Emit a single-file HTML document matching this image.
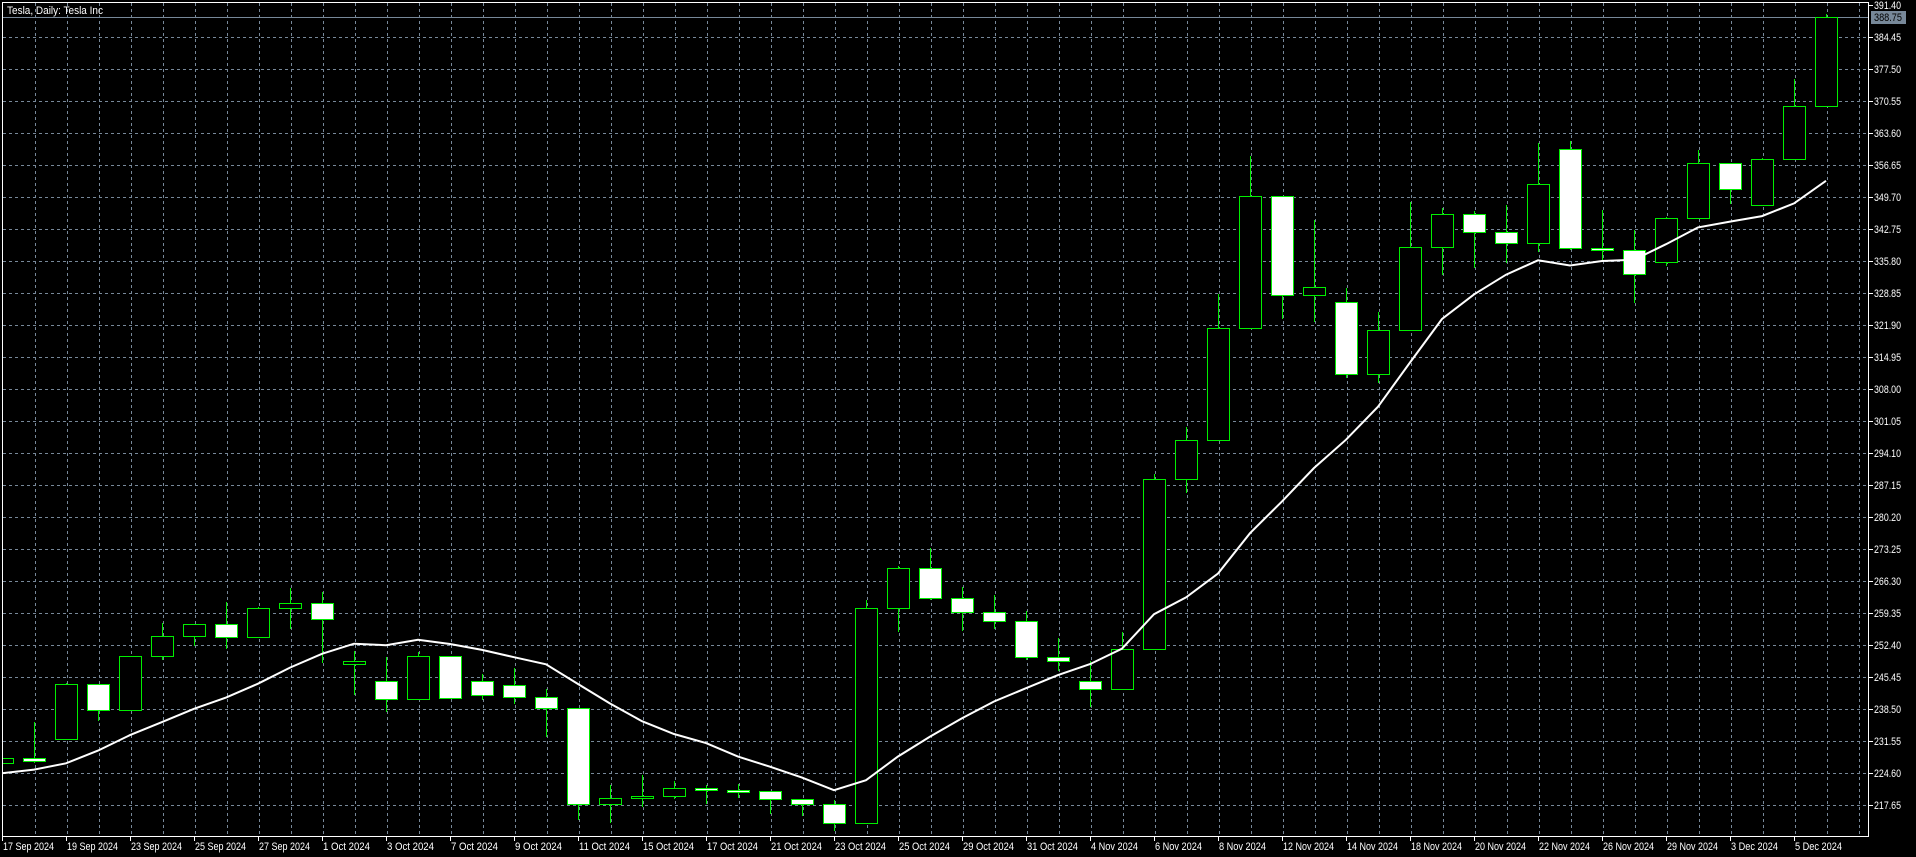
<!DOCTYPE html>
<html><head><meta charset="utf-8">
<style>
html,body{margin:0;padding:0;background:#000;width:1916px;height:857px;overflow:hidden}
svg{display:block}
text{font-family:"Liberation Sans",sans-serif;font-size:11px;fill:#fff}
</style></head>
<body>
<svg id="c" width="1916" height="857" xmlns="http://www.w3.org/2000/svg">
<rect width="1916" height="857" fill="#000"/>
<defs><clipPath id="cl"><rect x="3" y="3" width="1865" height="833"/></clipPath></defs>
<g id="grid" stroke="#778899" stroke-width="1" stroke-dasharray="3,3" shape-rendering="crispEdges"></g>
<line x1="3" y1="17.5" x2="1868" y2="17.5" stroke="#778899" shape-rendering="crispEdges"/>
<g id="bars" clip-path="url(#cl)" shape-rendering="crispEdges"></g>
<polyline id="ma" clip-path="url(#cl)" fill="none" stroke="#fff" stroke-width="2"/>
<g id="frame" stroke="#fff" stroke-width="1" shape-rendering="crispEdges" fill="none">
<path d="M2.5 836.5 V2.5 H1868.5 V836.5 H2.5"/>
</g>
<g id="axis"></g>
<text x="7" y="14" textLength="96" lengthAdjust="spacingAndGlyphs">Tesla, Daily:  Tesla Inc</text>
<rect x="1871" y="11" width="35" height="13" fill="#778899"/>
<text x="1874" y="21" textLength="28" lengthAdjust="spacingAndGlyphs" style="fill:#000">388.75</text>
</svg>
<script>
var NS="http://www.w3.org/2000/svg";
function el(t,a,p){var e=document.createElementNS(NS,t);for(var k in a)e.setAttribute(k,a[k]);p.appendChild(e);return e;}
function Y(p){return 5+(391.4-p)*32/6.95;}
var grid=document.getElementById('grid'),bars=document.getElementById('bars'),axis=document.getElementById('axis');
for(var x=35;x<1868;x+=32)el('line',{x1:x+.5,y1:3,x2:x+.5,y2:836},grid);
for(var y=37;y<836;y+=32)el('line',{x1:3,y1:y+.5,x2:1868,y2:y+.5},grid);
for(var i=0;i<26;i++){var p=391.40-6.95*i,yy=5+32*i;
 el('line',{x1:1868,y1:yy+.5,x2:1873,y2:yy+.5,stroke:'#fff','shape-rendering':'crispEdges'},axis);
 var t=el('text',{x:1874,y:yy+4,textLength:27,lengthAdjust:'spacingAndGlyphs'},axis);t.textContent=p.toFixed(2);}
var D=[[234.57,226.55,227.87],[235.68,226.88,227.20],[244.24,232.13,243.92],[243.99,235.92,238.25],[250,241.92,250],[257.19,249.05,254.27],[257.05,252.28,257.02],[261.75,251.53,254.22],[260.7,254.12,260.46],[264.86,255.77,261.63],
[263.98,248.53,258.02],[251.16,241.5,249.02],[249.79,237.81,240.66],[250.96,244.58,250.08],[249.83,240.7,240.83],[246.21,240.56,241.5],[247.43,239.51,241.05],[242.79,232.34,238.77],[223.34,214.38,217.8],[221.91,213.74,219.16],
[224.26,217.12,219.57],[222.82,218.93,221.33],[222.08,217.9,220.89],[222.28,219.23,220.7],[220.48,215.73,218.85],[218.22,215.26,217.97],[218.72,212.11,213.65],[262.12,242.65,260.48],[269.49,255.32,269.19],[273.54,262.24,262.51],
[264.98,255.51,259.52],[263.35,255.82,257.55],[259.75,249.25,249.85],[254,246.7,248.98],[248.9,238.88,242.84],[255.28,246.21,251.44],[289.59,275.62,288.53],[299.75,285.52,296.91],[328.71,297.66,321.22],[358.64,336,350],
[345.84,323.31,328.49],[344.6,322.5,330.24],[329.98,310.37,311.18],[324.68,309.22,320.72],[348.55,330.01,338.74],[347.38,332.75,346],[346.6,334.3,342.03],[347.99,335.28,339.64],[361.53,337.7,352.56],[361.93,338.2,338.59],
[346.96,335.66,338.23],[342.55,326.59,332.89],[345.45,334.65,345.16],[360,351.15,357.09],[355.69,348.2,351.42],[358.1,348.6,357.93],[375.43,359.5,369.49],[389.49,370.8,388.75]];
var OV={2:232,11:248.2,12:244.5,15:244.5,16:243.8,34:244.6,42:327,49:360.1,52:335.5,55:348};
var closes=[219.41,230.17,210.73,216.27,226.17,228.13,229.81,230.29,226.78];
var G='#00ee00',prev=226.78,pts=[];
for(var i=0;i<D.length;i++){
 var o=(i in OV)?OV[i]:prev,h=Math.max(D[i][0],o),l=Math.min(D[i][1],o),c=D[i][2],cx=2+32*i;
 el('line',{x1:cx+.5,y1:Math.round(Y(h)),x2:cx+.5,y2:Math.round(Y(l)),stroke:G},bars);
 var bt=Math.round(Y(Math.max(o,c))),bb=Math.round(Y(Math.min(o,c)));if(bb-bt<2)bb=bt+2;
 el('rect',{x:cx-10.5,y:bt+.5,width:22,height:bb-bt,fill:(c<o?'#fff':'#000'),stroke:G},bars);
 closes.push(c);prev=c;
 var s=0;for(var k=closes.length-10;k<closes.length;k++)s+=closes[k];
 pts.push(cx+','+Y(s/10).toFixed(1));
}
pts.unshift('0,'+Y(224.4).toFixed(1));
document.getElementById('ma').setAttribute('points',pts.join(' '));
var L=['17 Sep 2024','19 Sep 2024','23 Sep 2024','25 Sep 2024','27 Sep 2024','1 Oct 2024','3 Oct 2024','7 Oct 2024','9 Oct 2024','11 Oct 2024','15 Oct 2024','17 Oct 2024','21 Oct 2024','23 Oct 2024','25 Oct 2024','29 Oct 2024','31 Oct 2024','4 Nov 2024','6 Nov 2024','8 Nov 2024','12 Nov 2024','14 Nov 2024','18 Nov 2024','20 Nov 2024','22 Nov 2024','26 Nov 2024','29 Nov 2024','3 Dec 2024','5 Dec 2024'];
for(var j=0;j<L.length;j++){var x=2+64*j;
 el('line',{x1:x+.5,y1:836,x2:x+.5,y2:841,stroke:'#fff','shape-rendering':'crispEdges'},axis);
 var t=el('text',{x:x+1,y:850,textLength:(L[j].length*4.65).toFixed(0),lengthAdjust:'spacingAndGlyphs'},axis);t.textContent=L[j];}
</script>
</body></html>
